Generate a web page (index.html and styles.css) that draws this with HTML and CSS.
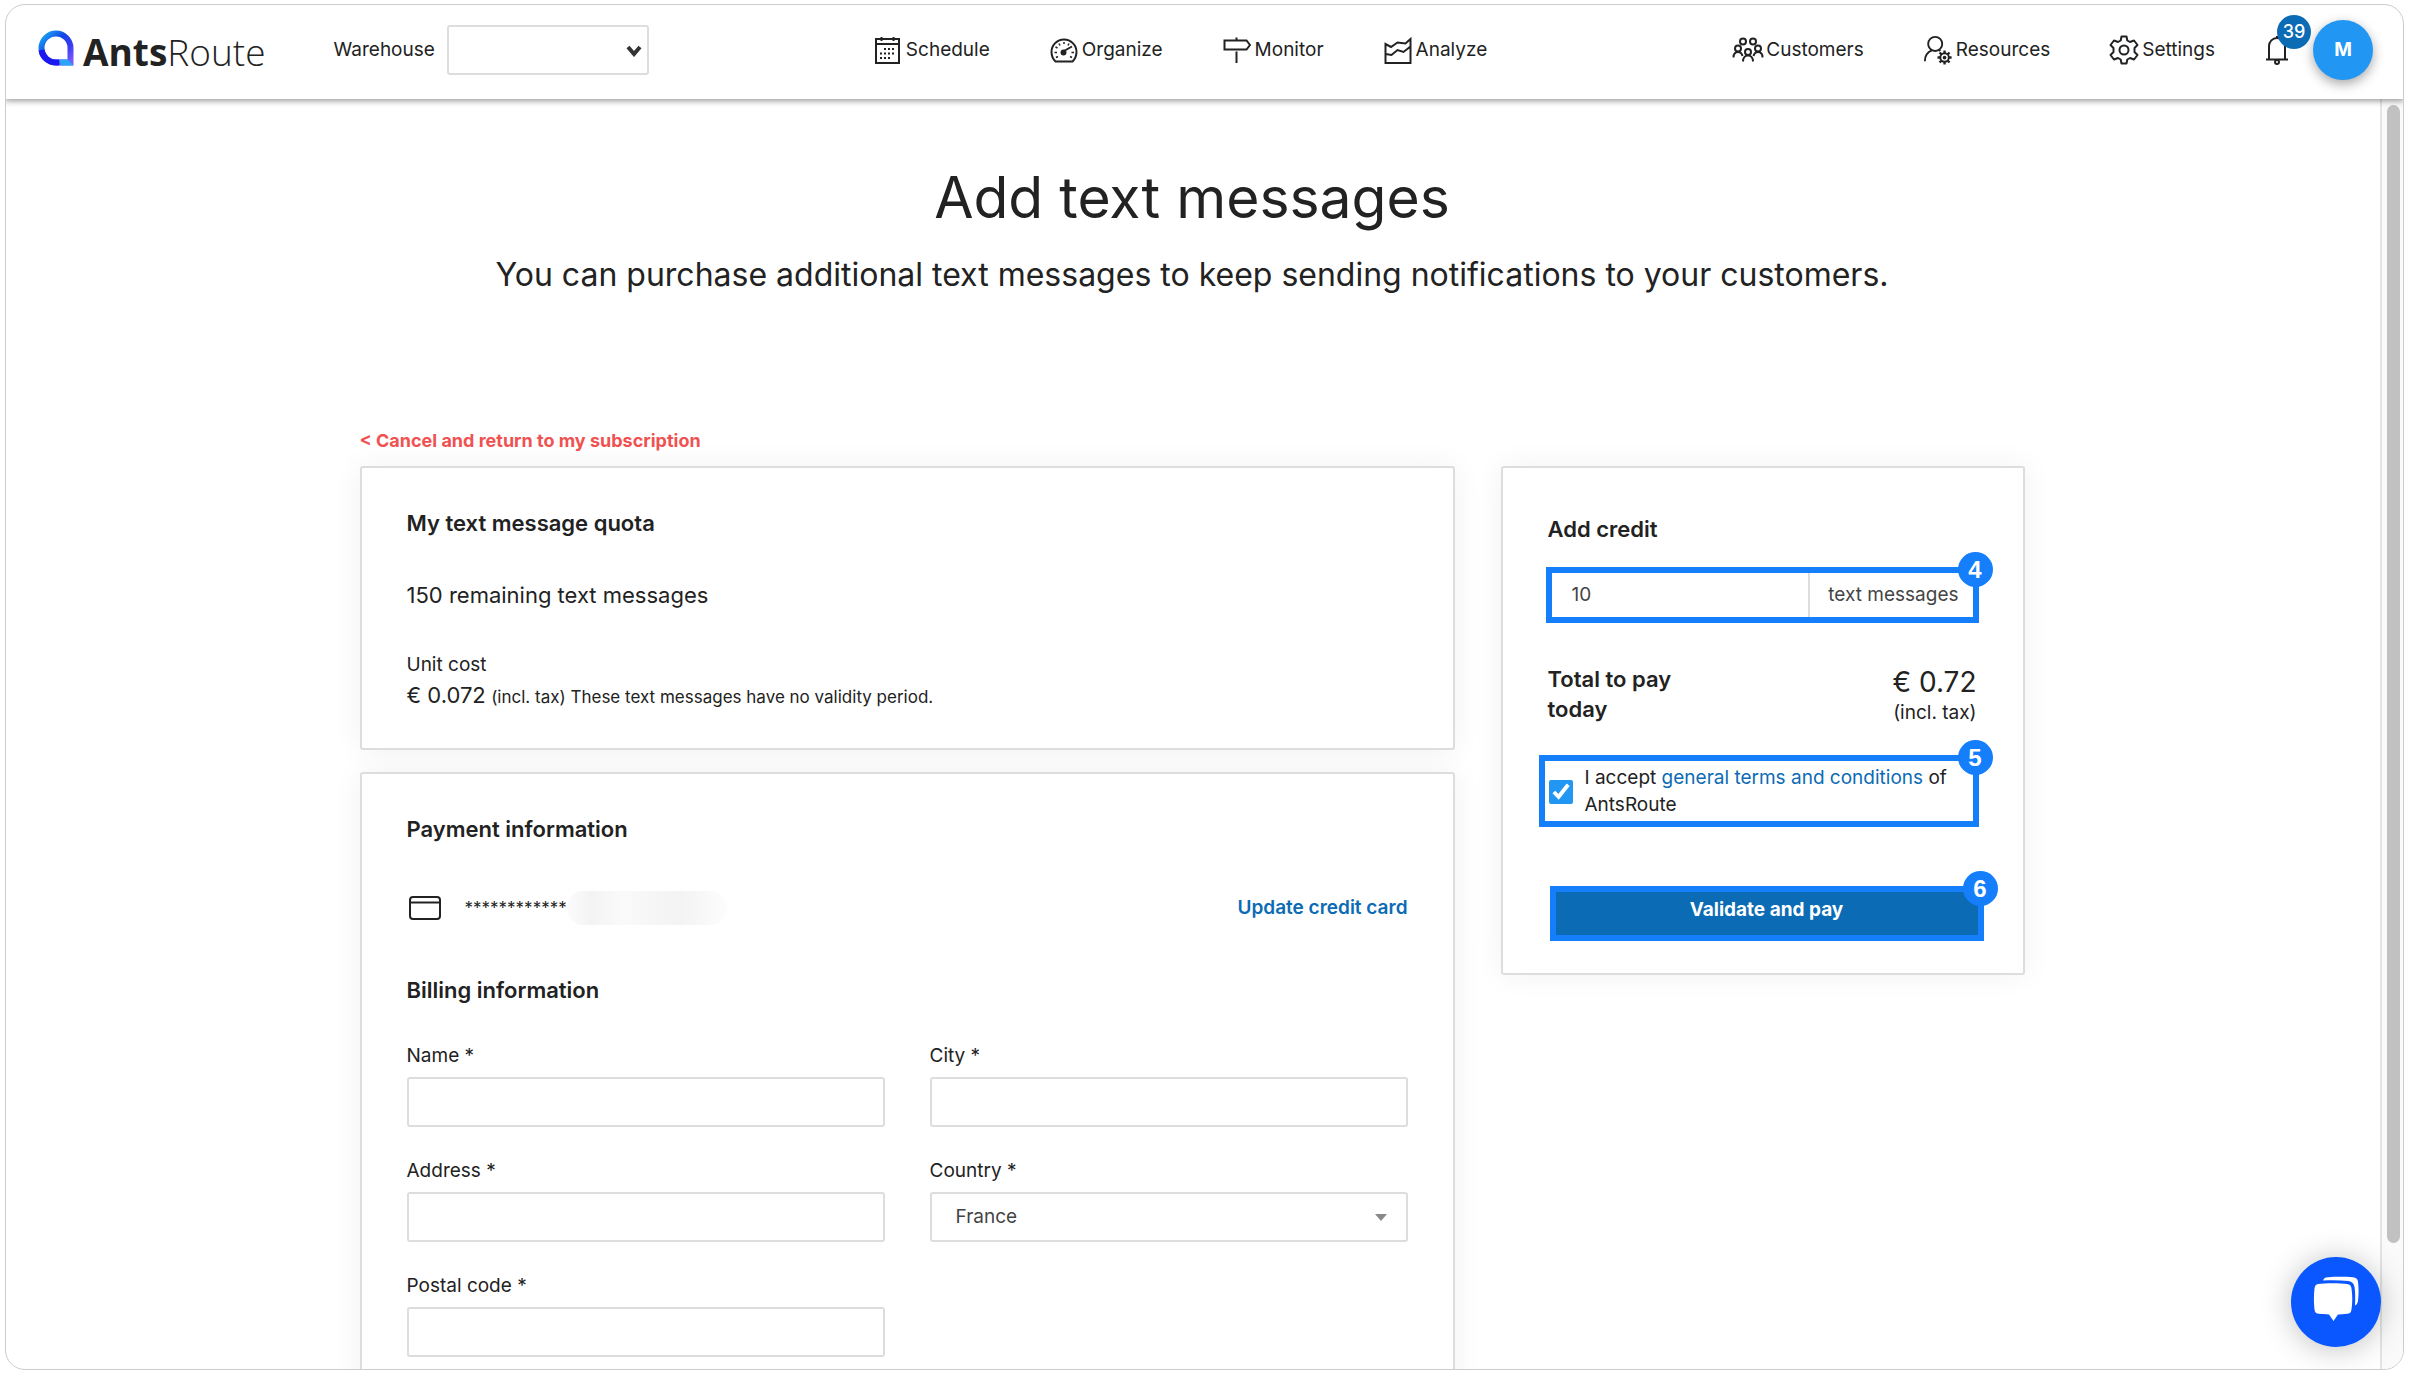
FILE: index.html
```html
<!DOCTYPE html>
<html lang="en">
    <head>
        <meta charset="UTF-8">
        <meta name="viewport" content="width=device-width, initial-scale=1.0">
        <title>AntsRoute - Add text messages</title>
        <link rel="stylesheet" href="styles.css">
    </head>

    <body>
        <div class="window">
            <header class="header">
                <a href="#" class="logo">
                    <svg class="logo-icon" viewBox="0 0 36 36" fill="none">
                        <defs>
                            <linearGradient id="ring" x1="0" y1="0" x2="1" y2="1">
                                <stop offset="0" stop-color="#1cb0f5"/>
                                <stop offset="0.4" stop-color="#1347e6"/>
                                <stop offset="0.7" stop-color="#3a3af0"/>
                                <stop offset="1" stop-color="#7a5cff"/>
                            </linearGradient>
                        </defs>
                        <path d="M18 3.500a14.500 14.500 0 0 0 0 29h14.500v-14.500a14.500 14.500 0 0 0-14.500-14.500z" stroke="url(#ring)" stroke-width="6"/>
                        <path d="M3.500 20a14.500 14.500 0 0 0 14.500 12.500h3" stroke="#1a1af0" stroke-width="6"/>
                        <path d="M21 29.500h9l5.500 6H23z" fill="#2aa5f7"/>
                    </svg>
                    <span class="logo-text"><b>Ants</b>Route</span>
                </a>

                <div class="warehouse">
                    <label for="warehouse">Warehouse</label>
                    <div class="select-box">
                        <select id="warehouse">
                            <option value=""></option>
                        </select>
                        <svg class="chevron" viewBox="0 0 16 12"><path d="M2 2l6 7 6-7" fill="none" stroke="#333" stroke-width="4"/></svg>
                    </div>
                </div>

                <nav class="nav">
                    <a href="#">
                        <svg class="icon" viewBox="0 0 28 28" fill="none" stroke="#222" stroke-width="2">
                            <path d="M2 3h23v24H2zM2 8h23M7.500 1v4M19.500 1v4"/>
                            <path d="M10 13h11M6 17.500h15M6 22h11" stroke-dasharray="2 2"/>
                        </svg>
                        Schedule
                    </a>
                    <a href="#">
                        <svg class="icon" viewBox="0 0 28 28" fill="none" stroke="#222" stroke-width="2">
                            <path d="M5.500 25.500C3 23 1.500 20 1.500 16a12.500 12.500 0 0 1 25 0c0 4-1.500 7-4 9.500z"/>
                            <path d="M14 6v2M9 7.500l1 2M19 7.500l-1 2M5.500 11l2 1M4.500 16.500h2.500M21.500 16.500h2.500M6 21.500l2-1M22 21.500l-2-1" stroke-width="1.500"/>
                            <path d="M22 10.500l-9 5"/>
                            <circle cx="13.500" cy="16.500" r="2" fill="#222"/>
                        </svg>
                        Organize
                    </a>
                    <a href="#">
                        <svg class="icon" viewBox="0 0 28 28" fill="none" stroke="#222" stroke-width="2">
                            <path d="M1.500 4.500h22l3.500 4.500-3.500 4.500h-22zM13.500 1.500v3M13.500 15.500V27"/>
                        </svg>
                        Monitor
                    </a>
                    <a href="#">
                        <svg class="icon" viewBox="0 0 28 28" fill="none" stroke="#222" stroke-width="2">
                            <path d="M1.500 8v19h25V3l-5 4.500-8-1L7 11zM1.500 18l6 1 6-5 6 2 7-5.500"/>
                        </svg>
                        Analyze
                    </a>
                </nav>

                <nav class="nav nav-right">
                    <a href="#">
                        <svg class="icon icon-wide" viewBox="0 0 32 28" fill="none" stroke="#222" stroke-width="2">
                            <circle cx="11" cy="5.500" r="3"/><circle cx="21" cy="5.500" r="3"/>
                            <circle cx="6" cy="12.500" r="3"/><circle cx="26" cy="12.500" r="3"/>
                            <circle cx="16" cy="16" r="3"/>
                            <path d="M1.500 21.500c0-3.500 1.500-5.500 4.500-5.500s4 2 4.500 4M30.500 21.500c0-3.500-1.500-5.500-4.500-5.500s-4 2-4.500 4M11 25.500c0-3.500 2-6 5-6s5 2.500 5 6"/>
                        </svg>
                        Customers
                    </a>
                    <a href="#">
                        <svg class="icon icon-wide" viewBox="0 0 32 32" fill="none" stroke="#222" stroke-width="2">
                            <circle cx="13" cy="9.500" r="7.500"/>
                            <path d="M2 28c0-6 2.500-9.500 7.500-11.500M17 16l1.500 1"/>
                            <circle cx="23" cy="24" r="4.500"/><circle cx="23" cy="24" r="1"/>
                            <path d="M23 16.500v3M23 28.500v3M15.500 24h3M27.500 24h3M17.700 18.700l2 2M26.300 27.300l2 2M28.300 18.700l-2 2M19.700 27.300l-2 2" stroke-width="2.500"/>
                        </svg>
                        Resources
                    </a>
                    <a href="#">
                        <svg class="icon icon-wide" viewBox="0 0 30 30" fill="none" stroke="#222" stroke-width="2" stroke-linejoin="round">
                            <path d="M12.500 1.500h5l.8 4 2.700 1.500 4-1.500 3.500 4.500-3 3v4l3 3-3.500 4.500-4-1.500-2.700 1.500-.8 4h-5l-.8-4L9 23l-4 1.500L1.500 20l3-3v-4l-3-3L5 5.500 9 7l2.700-1.500z"/>
                            <circle cx="15" cy="15" r="4.500"/>
                        </svg>
                        Settings
                    </a>
                </nav>

                <button class="bell" type="button" aria-label="Notifications">
                    <svg viewBox="0 0 24 30" fill="none" stroke="#222" stroke-width="2">
                        <path d="M1 24.500h22M4 24V11a8 8 0 0 1 16 0v13M12 3V1"/>
                        <circle cx="12" cy="27" r="2"/>
                    </svg>
                    <span class="bell-count">39</span>
                </button>
                <button class="avatar" type="button">M</button>
            </header>

            <div class="scroll-area">
                <main class="page">
                    <h1 class="title">Add text messages</h1>
                    <p class="subtitle">You can purchase additional text messages to keep sending notifications to your customers.</p>

                    <a href="#" class="cancel">&lt; Cancel and return to my subscription</a>

                    <div class="columns">
                        <div class="left">
                            <section class="card quota">
                                <h2>My text message quota</h2>
                                <p class="remaining">150 remaining text messages</p>
                                <div class="unit">
                                    <p>Unit cost</p>
                                    <p><span class="price">€ 0.072</span> <small>(incl. tax) These text messages have no validity period.</small></p>
                                </div>
                            </section>

                            <section class="card payment">
                                <h2>Payment information</h2>
                                <div class="card-row">
                                    <svg class="credit-icon" viewBox="0 0 32 24" fill="none" stroke="#222" stroke-width="2">
                                        <rect x="1" y="1" width="30" height="22" rx="3"/>
                                        <path d="M2 6.500h28"/>
                                    </svg>
                                    <span class="card-number">************</span>
                                    <span class="card-hidden"></span>
                                    <a href="#" class="update">Update credit card</a>
                                </div>

                                <h2>Billing information</h2>
                                <form class="form">
                                    <div class="field">
                                        <label for="name">Name *</label>
                                        <input type="text" id="name">
                                    </div>
                                    <div class="field">
                                        <label for="city">City *</label>
                                        <input type="text" id="city">
                                    </div>
                                    <div class="field">
                                        <label for="address">Address *</label>
                                        <input type="text" id="address">
                                    </div>
                                    <div class="field">
                                        <label for="country">Country *</label>
                                        <div class="select-box">
                                            <select id="country">
                                                <option>France</option>
                                            </select>
                                            <span class="arrow"></span>
                                        </div>
                                    </div>
                                    <div class="field">
                                        <label for="postal">Postal code *</label>
                                        <input type="text" id="postal">
                                    </div>
                                </form>
                            </section>
                        </div>

                        <aside class="card credit">
                            <h2><label for="quantity">Add credit</label></h2>
                            <div class="marked quantity">
                                <input type="text" id="quantity" value="10">
                                <span class="unit-label">text messages</span>
                                <span class="step">4</span>
                            </div>

                            <div class="total">
                                <h2>Total to pay today</h2>
                                <div class="amount">
                                    <p class="amount-value">€ 0.72</p>
                                    <p>(incl. tax)</p>
                                </div>
                            </div>

                            <div class="marked terms">
                                <input type="checkbox" id="terms" checked>
                                <label for="terms">I accept <a href="#">general terms and conditions</a> of AntsRoute</label>
                                <span class="step">5</span>
                            </div>

                            <button class="marked pay" type="button">
                                Validate and pay
                                <span class="step">6</span>
                            </button>
                        </aside>
                    </div>
                </main>

                <div class="scrollbar"><div class="thumb"></div></div>
            </div>

            <button class="chat" type="button" aria-label="Chat">
                <svg viewBox="0 0 46 46" fill="#fff">
                    <path d="M5 8C12 7 27 7 34 8c3 .5 4 1.500 4.500 4.500 1 7 1 14 0 21-.5 3-1.500 4-4.500 4.300-3 .4-6 .6-9 .7L20.500 45 16 38.500c-3-.1-7-.3-10-.7-3-.3-4-1.300-4.500-4.300-.8-7-.8-14 0-21C2 9.500 3 8.300 5 8z"/>
                    <path d="M10 4.500C11 2 12 1.500 15 1.200c8-.6 17-.6 25 0 3 .3 4.500 1.500 5 4.300.8 7 .8 13 0 19-.3 2.500-1 4-3 5 .4-7 .3-13-.5-18.500-.5-3.500-2.500-5.500-6-6-8-.9-17-1-25.500-.5z"/>
                </svg>
            </button>
        </div>
    </body>
</html>
```

FILE: styles.css
```css
* {
    box-sizing: border-box;
}

body {
    margin: 0;
    padding: 4px 5px;
    height: 100vh;
    background-color: #fff;
    color: #222;
    font-family: Inter, 'Open Sans', sans-serif;
    font-size: 19px;
    line-height: 26px;
}

h1, h2, p {
    margin: 0;
    font-weight: 400;
}

h2 {
    font-size: 22px;
    line-height: 30px;
    font-weight: 600;
}

a {
    color: inherit;
    text-decoration: none;
}

button, input, select {
    font: inherit;
    color: inherit;
}

button {
    border: none;
    padding: 0;
    cursor: pointer;
}

.window {
    position: relative;
    display: flex;
    flex-direction: column;
    height: 100%;
    border: 1px solid #ccc;
    border-radius: 20px;
    overflow: hidden;
}

/* header */

.header {
    display: flex;
    align-items: center;
    height: 94px;
    flex-shrink: 0;
    padding: 0 30px 4px 32px;
    box-shadow: 0 1px 6px 1px rgba(0, 0, 0, 0.4);
    z-index: 1;
}

.logo {
    display: flex;
    align-items: center;
    gap: 9px;
    padding-top: 4px;
}

.logo-icon {
    width: 36px;
    height: 36px;
    margin-bottom: 8px;
}

.logo-text {
    font-family: 'Open Sans', sans-serif;
    font-size: 37px;
    font-weight: 300;
    line-height: 50px;
}

.logo-text b {
    font-weight: 700;
}

.warehouse {
    display: flex;
    align-items: center;
    gap: 12px;
    margin-left: 68px;
}

.select-box {
    position: relative;
}

.warehouse select {
    width: 202px;
}

.chevron {
    position: absolute;
    right: 7px;
    top: 20px;
    width: 16px;
    height: 12px;
    pointer-events: none;
}

select, .field input {
    display: block;
    width: 100%;
    height: 50px;
    padding: 0 24px;
    border: 2px solid #ddd;
    border-radius: 3px;
    background-color: #fff;
    color: #444;
    appearance: none;
    outline: none;
}

.nav {
    display: flex;
    gap: 60px;
    margin-left: 225px;
}

.nav a {
    display: flex;
    align-items: center;
    gap: 4px;
}

.nav-right {
    gap: 58px;
    margin-left: auto;
}

.nav-right a {
    gap: 2px;
}

.icon {
    width: 28px;
    height: 28px;
}

.icon-wide {
    width: 32px;
    height: 30px;
}

.bell {
    position: relative;
    margin: 0 24px 0 50px;
    width: 24px;
    height: 30px;
    background: none;
}

.bell-count {
    position: absolute;
    left: 12px;
    top: -20px;
    width: 34px;
    height: 34px;
    border-radius: 50%;
    background-color: #0b6bb4;
    color: #fff;
    font-size: 18px;
    font-weight: 500;
    line-height: 34px;
}

.avatar {
    width: 60px;
    height: 60px;
    border-radius: 50%;
    background-color: #2196f3;
    color: #fff;
    font-weight: 700;
    box-shadow: 0 4px 12px rgba(0, 0, 0, 0.35);
}

/* page */

.scroll-area {
    display: flex;
    flex: 1;
    min-height: 0;
}

.page {
    flex: 1;
    padding: 64px 26px 0 24px;
    overflow: hidden;
}

.title {
    font-size: 57px;
    line-height: 70px;
    text-align: center;
}

.subtitle {
    margin-top: 20px;
    font-size: 32px;
    line-height: 44px;
    text-align: center;
}

.cancel {
    display: block;
    max-width: 1665px;
    margin: 131px auto 12px;
    color: #f05252;
    font-size: 18px;
    font-weight: 700;
}

.columns {
    display: grid;
    grid-template-columns: minmax(0, 1fr) 524px;
    gap: 46px;
    align-items: start;
    max-width: 1665px;
    margin: 0 auto;
}

.left {
    display: grid;
    gap: 22px;
}

.card {
    padding: 40px 45px;
    border: 2px solid #ddd;
    border-radius: 3px;
    background-color: #fff;
    box-shadow: 0 0 30px rgba(0, 0, 0, 0.06);
}

.quota {
    padding-bottom: 36px;
}

.remaining, .price {
    font-size: 22px;
}

.remaining {
    margin-top: 42px;
    line-height: 30px;
}

.unit {
    margin-top: 40px;
    line-height: 30px;
}

.unit small {
    font-size: 17px;
}

.card-row {
    display: flex;
    align-items: center;
    height: 34px;
    margin: 47px 0 50px;
}

.credit-icon {
    width: 32px;
    height: 24px;
    margin: 0 24px 0 2px;
}

.card-number {
    font-size: 17px;
}

.card-hidden {
    width: 160px;
    height: 34px;
    border-radius: 16px;
    background: linear-gradient(90deg, #fcfcfc, #f3f3f3 15%, #fafafa 35%, #f3f3f3 70%, #fdfdfd);
}

.update {
    margin-left: auto;
    color: #0b6bb4;
    font-weight: 600;
}

.form {
    display: grid;
    grid-template-columns: 1fr 1fr;
    gap: 31px 45px;
    margin-top: 38px;
}

.field {
    display: grid;
    gap: 8px;
}

.arrow {
    position: absolute;
    right: 21px;
    top: 22px;
    border: 6px solid transparent;
    border-top: 7px solid #888;
    border-bottom: none;
    pointer-events: none;
}

/* credit card on the right */

.credit {
    padding: 46px 39px 32px;
}

.credit h2 {
    margin-left: 6px;
}

.marked {
    position: relative;
    border: 6px solid #157efb;
}

.step {
    position: absolute;
    right: -20px;
    top: -21px;
    width: 35px;
    height: 35px;
    border-radius: 50%;
    background-color: #157efb;
    color: #fff;
    font-family: 'Liberation Sans', sans-serif;
    font-size: 24px;
    font-weight: 700;
    line-height: 35px;
    text-align: center;
}

.quantity {
    display: flex;
    margin: 23px 5px 0 4px;
    height: 56px;
    line-height: 44px;
}

.quantity input {
    flex: 1;
    min-width: 0;
    padding: 0 20px;
    border: none;
    border-right: 2px solid #ddd;
    outline: none;
    color: #444;
}

.unit-label {
    padding: 0 14px 0 18px;
    color: #444;
}

.total {
    display: flex;
    justify-content: space-between;
    margin: 41px 7px 0 0;
}

.total h2 {
    width: 140px;
}

.amount {
    text-align: right;
}

.amount-value {
    font-size: 28px;
    line-height: 36px;
}

.terms {
    display: flex;
    align-items: center;
    gap: 12px;
    height: 72px;
    margin: 29px 5px 0 -3px;
    padding-left: 4px;
    line-height: 27px;
}

.terms input {
    flex-shrink: 0;
    width: 24px;
    height: 24px;
    margin: 2px 0 0;
    accent-color: #2196f3;
}

.terms a {
    color: #0b6bb4;
}

.pay {
    display: block;
    width: 434px;
    height: 55px;
    margin: 59px 0 0 8px;
    padding-bottom: 8px;
    background-color: #0b6bb4;
    color: #fff;
    font-weight: 700;
}

/* scrollbar and chat */

.scrollbar {
    width: 23px;
    padding: 6px 3px 0 5px;
    border-left: 2px solid #e4e4e4;
    background-color: #fafafa;
}

.thumb {
    width: 13px;
    height: 90%;
    border-radius: 7px;
    background-color: #c1c1c1;
}

.chat {
    position: absolute;
    right: 22px;
    bottom: 22px;
    width: 90px;
    height: 90px;
    border-radius: 50%;
    background-color: #0a57ff;
    box-shadow: 0 2px 30px rgba(0, 0, 0, 0.25);
    z-index: 2;
}

.chat svg {
    width: 46px;
    height: 46px;
}
```
